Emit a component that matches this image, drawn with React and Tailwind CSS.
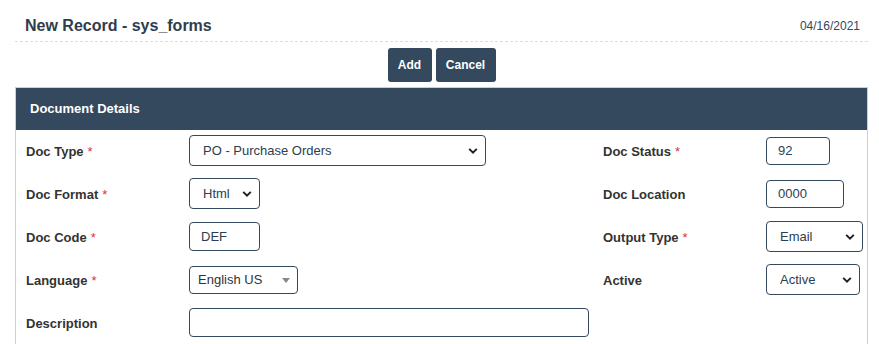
import { useState } from "react";

const inputBase =
  "rounded-[4px] border border-[#34495e] bg-white text-[13px] text-[#2c3e50] outline-none";

function Chevron() {
  return (
    <svg
      className="pointer-events-none absolute right-[8px] top-1/2 -translate-y-1/2"
      width="10"
      height="7"
      viewBox="0 0 10 7"
    >
      <path d="M1.2 1.4 5 5.2 8.8 1.4" fill="none" stroke="#222" strokeWidth="2" />
    </svg>
  );
}

function Select({ value, options, className, pad = "pl-[13px]" }) {
  const [current, setCurrent] = useState(value);
  return (
    <div className={`relative ${className}`}>
      <select
        value={current}
        onChange={(e) => setCurrent(e.target.value)}
        className={`${inputBase} h-full w-full appearance-none ${pad}`}
      >
        {options.map((o) => (
          <option key={o}>{o}</option>
        ))}
      </select>
      <Chevron />
    </div>
  );
}

function Label({ children, required }) {
  return (
    <span className="text-[13px] font-bold text-[#333]">
      {children}
      {required && <span className="ml-[4px] font-normal text-[#e0303a]">*</span>}
    </span>
  );
}

function Row({ label, required, children }) {
  return (
    <div className="flex h-[43px] items-center">
      <div className="w-[163px] shrink-0">
        <Label required={required}>{label}</Label>
      </div>
      {children}
    </div>
  );
}

export default function App() {
  return (
    <div className="ml-[15px] mr-[11px] font-['Liberation_Sans',Arial,sans-serif]">
      <div className="flex h-[42px] items-center justify-between border-b border-dashed border-[#dcdcdc] pl-[10px] pr-[8px] pt-[10px]">
        <h1 className="text-[16px] font-bold text-[#2f3d4c]">New Record - sys_forms</h1>
        <span className="text-[12px] text-[#34495e]">04/16/2021</span>
      </div>

      <div className="mb-[5px] mt-[6px] flex justify-center gap-[4px]">
        <button className="h-[34px] w-[44px] rounded-[3px] bg-[#34495e] text-[12px] font-bold text-white">
          Add
        </button>
        <button className="h-[34px] w-[60px] rounded-[3px] bg-[#34495e] text-[12px] font-bold text-white">
          Cancel
        </button>
      </div>

      <div className="border border-[#cfcfcf]">
        <div className="flex h-[42px] items-center bg-[#34495e] pl-[14px]">
          <span className="text-[13px] font-bold text-white">Document Details</span>
        </div>

        <div className="-mt-[1px] grid grid-cols-[577px_1fr] pl-[10px]">
          <div>
            <Row label="Doc Type" required>
              <Select
                className="h-[31px] w-[297px]"
                value="PO - Purchase Orders"
                options={["PO - Purchase Orders", "SO - Sales Orders", "INV - Invoices"]}
              />
            </Row>
            <Row label="Doc Format" required>
              <Select className="h-[31px] w-[71px]" value="Html" options={["Html", "Pdf", "Text"]} />
            </Row>
            <Row label="Doc Code" required>
              <input
                defaultValue="DEF"
                className={`${inputBase} h-[29px] w-[71px] pl-[11px]`}
              />
            </Row>
            <Row label="Language" required>
              <div className="relative h-[28px] w-[109px]">
                <select
                  defaultValue="English US"
                  className={`${inputBase} h-full w-full appearance-none pl-[8px] text-[#333]`}
                >
                  <option>English US</option>
                  <option>French</option>
                  <option>Spanish</option>
                </select>
                <span className="pointer-events-none absolute right-[8px] top-[12px] h-0 w-0 border-x-[4px] border-t-[5px] border-x-transparent border-t-[#888]" />
              </div>
            </Row>
            <Row label="Description">
              <input className={`${inputBase} h-[29px] w-[400px]`} />
            </Row>
          </div>

          <div>
            <Row label="Doc Status" required>
              <input
                defaultValue="92"
                className={`${inputBase} h-[28px] w-[64px] pl-[11px]`}
              />
            </Row>
            <Row label="Doc Location">
              <input
                defaultValue="0000"
                className={`${inputBase} h-[28px] w-[78px] pl-[11px]`}
              />
            </Row>
            <Row label="Output Type" required>
              <Select
                className="h-[31px] w-[97px]"
                value="Email"
                options={["Email", "Print", "Fax"]}
              />
            </Row>
            <Row label="Active">
              <Select
                className="h-[31px] w-[94px]"
                value="Active"
                options={["Active", "Inactive"]}
              />
            </Row>
          </div>
        </div>
      </div>
    </div>
  );
}
